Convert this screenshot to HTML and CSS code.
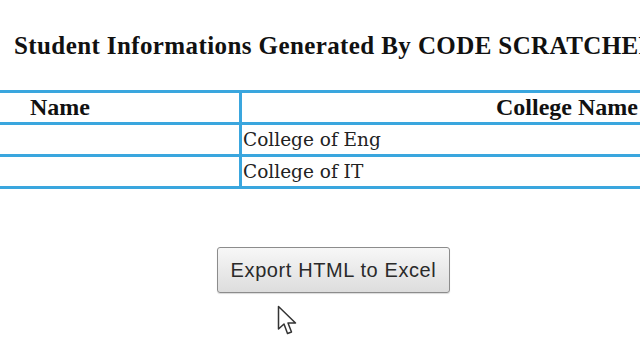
FILE: index.html
```html
<!DOCTYPE html>
<html>
<head>
<meta charset="utf-8">
<link rel="stylesheet" href="styles.css">
</head>
<body>
<div class="page">
  <h2 class="title">Student Informations Generated By CODE SCRATCHERS</h2>
  <table class="grid">
    <thead>
      <tr><th class="c1">Name</th><th class="c2">College Name</th></tr>
    </thead>
    <tbody>
      <tr><td></td><td>College of Eng</td></tr>
      <tr><td></td><td>College of IT</td></tr>
    </tbody>
  </table>
  <div class="actions">
    <button class="btn">Export HTML to Excel</button>
  </div>
</div>
<svg class="cursor" width="22" height="32" viewBox="0 0 22 32">
  <path d="M1.5 1.5 L1.5 24 L7 19 L10.5 28.5 L14.5 27 L11 18 L18.5 18 Z" fill="#fff" stroke="#333" stroke-width="1.5" stroke-linejoin="round"/>
</svg>
</body>
</html>
```
FILE: styles.css
```css
html, body {
  margin: 0;
  padding: 0;
  background: #fff;
  overflow: hidden;
  width: 640px;
  height: 360px;
}
.page {
  padding-top: 32px;
  font-family: "Liberation Serif", "Times New Roman", serif;
  color: #111;
}
.title {
  margin: 0 0 0 14px;
  font-size: 25px;
  line-height: 28px;
  letter-spacing: 0.4px;
  font-weight: bold;
  white-space: nowrap;
}
.grid {
  margin-top: 30px;
  margin-left: -122px;
  border-collapse: collapse;
  table-layout: fixed;
  width: 1008px;
}
.grid th, .grid td {
  border: 3px solid #3aa6de;
  padding: 0;
}
.grid th {
  height: 29px;
  line-height: 29px;
  font-size: 24px;
  text-align: center;
  font-weight: bold;
}
.grid td {
  height: 29px;
  line-height: 29px;
  font-family: "DejaVu Serif", serif;
  font-size: 18.5px;
  color: #222;
  text-align: left;
  padding-left: 1px;
}
.c1 { width: 358px; }
.c2 { width: 650px; }
.actions {
  margin-top: 58px;
  padding-left: 217px;
}
.btn {
  width: 233px;
  height: 46px;
  font-family: "Liberation Sans", Arial, sans-serif;
  font-size: 20px;
  letter-spacing: 0.6px;
  color: #2a2a2a;
  background: linear-gradient(#f7f7f7, #dddddd);
  border: 1px solid #8c8c8c;
  border-radius: 3px;
  box-shadow: 0 1px 1px rgba(0,0,0,0.15);
  padding: 0;
}
.cursor {
  position: absolute;
  left: 277px;
  top: 305px;
}
```
